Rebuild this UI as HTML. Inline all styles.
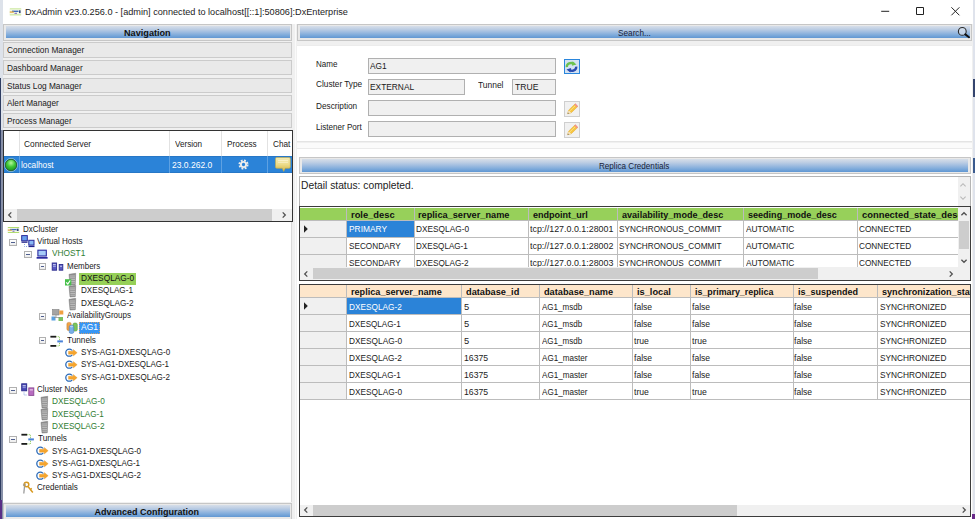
<!DOCTYPE html>
<html><head><meta charset="utf-8"><title>DxAdmin</title>
<style>
html,body{margin:0;padding:0}
body{width:975px;height:519px;overflow:hidden;background:#f0f0f0;font-family:"Liberation Sans",sans-serif;font-size:9px;color:#000;position:relative}
div,span,svg{position:absolute;box-sizing:border-box;white-space:nowrap}
.hdr{background:#e9e9e9;border:1px solid #c6c6c6}
.hdr i{position:absolute;left:1.5px;right:1.5px;top:1px;bottom:1.5px;background:linear-gradient(#d6dee9 0%,#bfcfe4 25%,#a0bde0 50%,#7fabdb 75%,#6197d2 100%)}
.nav{left:3px;width:289px;height:15.500px;background:#e9e9e9;border:1px solid #cbcbcb}
.exp{width:7.5px;height:7px;border:1px solid #b0b0b0;background:linear-gradient(#fff,#ececec)}
.exp:after{content:"";position:absolute;left:1px;right:1px;top:2px;height:1px;background:#4f5f8f}
.inp{background:#f0f0f0;border:1px solid #b0b0b0;height:16px}
.btn{width:16px;height:16px;background:#f1f1f1;border:1px solid #cfcfcf}
.vl{width:1px;background:#bcbcbc}
.hl{height:1px;background:#bcbcbc}
</style></head><body>
<div style="left:0;top:0;width:973px;height:24px;background:#fff"></div>
<div style="left:0;top:0;width:3px;height:519px;background:#dde2ea"></div>
<div style="left:0;top:78px;width:1px;height:441px;background:#2e3c60"></div><div style="left:1px;top:130px;width:1.500px;height:389px;background:#8790a8"></div>
<div style="left:972.700px;top:0;width:2.300px;height:519px;background:#dfe3ec"></div>
<svg style="left:9px;top:7.500px" width="13" height="8" viewBox="0 0 13 8"><path d="M0.800 1h11.400M0.800 6.800h11.400" stroke="#b2dc70" stroke-width="1"/><rect x="0.400" y="1.500" width="12" height="4.800" fill="#f3f9e8"/><rect x="3" y="2.600" width="6.500" height="1.400" fill="#3f6fc0"/><rect x="0.800" y="3.400" width="4" height="1.300" fill="#e2a23a"/><rect x="10" y="2.300" width="1.600" height="2.800" fill="#3a4a80"/><rect x="5.500" y="4.800" width="2.500" height="1" fill="#7a62b0"/></svg>
<div style="left:24.5px;top:5.2px;line-height:14px;height:14px;font-size:9.7px;color:#1c1c1c;transform:scaleX(0.9443);transform-origin:0 0;">DxAdmin v23.0.256.0 - [admin] connected to localhost[[::1]:50806]:DxEnterprise</div>
<svg style="left:878px;top:4px" width="90" height="16" viewBox="0 0 90 16"><path d="M3.200 7.300h8M38.500 3.500h7v7h-7zM73.400 3.300l8 8M81.400 3.300l-8 8" fill="none" stroke="#222" stroke-width="1"/></svg>
<div class="hdr" style="left:3px;top:24px;width:289px;height:16.500px"><i></i></div>
<div style="left:123.5px;top:26.8px;line-height:13px;height:13px;font-size:9.0px;color:#111;transform:scaleX(1.0151);transform-origin:0 0;font-weight:bold;">Navigation</div>
<div class="nav" style="top:42.2px"></div>
<div style="left:7.2px;top:44.3px;line-height:13px;height:13px;font-size:9.0px;color:#1a1a1a;transform:scaleX(0.9240);transform-origin:0 0;">Connection Manager</div>
<div class="nav" style="top:59.9px"></div>
<div style="left:7.2px;top:62.0px;line-height:13px;height:13px;font-size:9.0px;color:#1a1a1a;transform:scaleX(0.9226);transform-origin:0 0;">Dashboard Manager</div>
<div class="nav" style="top:77.5px"></div>
<div style="left:7.2px;top:79.6px;line-height:13px;height:13px;font-size:9.0px;color:#1a1a1a;transform:scaleX(0.9216);transform-origin:0 0;">Status Log Manager</div>
<div class="nav" style="top:95.2px"></div>
<div style="left:7.2px;top:97.3px;line-height:13px;height:13px;font-size:9.0px;color:#1a1a1a;transform:scaleX(0.9146);transform-origin:0 0;">Alert Manager</div>
<div class="nav" style="top:112.8px"></div>
<div style="left:7.2px;top:114.9px;line-height:13px;height:13px;font-size:9.0px;color:#1a1a1a;transform:scaleX(0.9173);transform-origin:0 0;">Process Manager</div>
<div style="left:2.500px;top:130px;width:290.500px;height:92px;background:#fff;border:1px solid #333"></div>
<div style="left:19px;top:131px;width:1px;height:25px;background:#e2e2e2"></div>
<div style="left:169px;top:131px;width:1px;height:25px;background:#e2e2e2"></div>
<div style="left:221px;top:131px;width:1px;height:25px;background:#e2e2e2"></div>
<div style="left:267px;top:131px;width:1px;height:25px;background:#e2e2e2"></div>
<div style="left:24.1px;top:138.4px;line-height:13px;height:13px;font-size:9.0px;color:#1a1a1a;transform:scaleX(0.9250);transform-origin:0 0;">Connected Server</div>
<div style="left:175.3px;top:138.4px;line-height:13px;height:13px;font-size:9.0px;color:#1a1a1a;transform:scaleX(0.9028);transform-origin:0 0;">Version</div>
<div style="left:226.5px;top:138.4px;line-height:13px;height:13px;font-size:9.0px;color:#1a1a1a;transform:scaleX(0.9135);transform-origin:0 0;">Process</div>
<div style="left:272.5px;top:138.4px;line-height:13px;height:13px;font-size:9.0px;color:#1a1a1a;transform:scaleX(0.9100);transform-origin:0 0;">Chat</div>
<div style="left:3.500px;top:156.300px;width:288.500px;height:16.700px;background:#2b83d8;border-top:1px solid #2777c6;border-bottom:1px solid #2777c6"></div>
<div style="left:19px;top:156.300px;width:1px;height:16.700px;background:#5ea1e2"></div>
<div style="left:169px;top:156.300px;width:1px;height:16.700px;background:#5ea1e2"></div>
<div style="left:221px;top:156.300px;width:1px;height:16.700px;background:#5ea1e2"></div>
<div style="left:267px;top:156.300px;width:1px;height:16.700px;background:#5ea1e2"></div>
<svg style="left:4px;top:157.500px" width="14" height="14" viewBox="0 0 14 14"><defs><radialGradient id="gb" cx="0.5" cy="0.32" r="0.65"><stop offset="0" stop-color="#b4f79c"/><stop offset="0.55" stop-color="#3cc632"/><stop offset="1" stop-color="#1f9a22"/></radialGradient></defs><circle cx="7" cy="7" r="6.500" fill="none" stroke="#d6ead6" stroke-width="0.7" opacity="0.8"/><circle cx="7" cy="7" r="5.700" fill="url(#gb)" stroke="#2c5a30" stroke-width="0.9"/></svg>
<div style="left:21.2px;top:159.2px;line-height:13px;height:13px;font-size:9.0px;color:#fff;transform:scaleX(0.9178);transform-origin:0 0;">localhost</div>
<div style="left:172.0px;top:159.2px;line-height:13px;height:13px;font-size:9.0px;color:#fff;transform:scaleX(0.9450);transform-origin:0 0;">23.0.262.0</div>
<svg style="left:237.300px;top:157.900px" width="13" height="13" viewBox="0 0 13 13"><circle cx="6.500" cy="6.500" r="4.100" fill="none" stroke="#ececec" stroke-width="1.900" stroke-dasharray="1.850 1.370"/><circle cx="6.500" cy="6.500" r="2.600" fill="none" stroke="#ececec" stroke-width="1.900"/></svg>
<svg style="left:275px;top:157px" width="16" height="15" viewBox="0 0 16 15"><defs><linearGradient id="cg" x1="0" y1="0" x2="0" y2="1"><stop offset="0" stop-color="#f3eab4"/><stop offset="0.5" stop-color="#ecdc8a"/><stop offset="1" stop-color="#d2b444"/></linearGradient></defs><path d="M1.800 0.500h12.200a1.300 1.300 0 0 1 1.300 1.300v8.200a1.300 1.300 0 0 1-1.300 1.300H10.200l-1.500 3.100-1.500-3.100H1.800a1.300 1.300 0 0 1-1.300-1.300v-8.200a1.300 1.300 0 0 1 1.300-1.300z" fill="url(#cg)" stroke="#c9ad42" stroke-width="0.6"/><path d="M3 3.500h10M3 5.300h10" stroke="#f9f2cc" stroke-width="0.9"/></svg>
<div style="left:3.500px;top:208.500px;width:288.500px;height:12.500px;background:#f0f0f0"></div>
<div style="left:16.500px;top:208.500px;width:255px;height:12.500px;background:#cdcdcd"></div>
<svg style="left:5.0px;top:209.7px" width="10" height="10" viewBox="-5 -5 10 10"><path transform="translate(-1.3 0)" d="M2.6 -2.6L0 0L2.6 2.6" fill="none" stroke="#505050" stroke-width="1.3"/></svg>
<svg style="left:279.0px;top:209.7px" width="10" height="10" viewBox="-5 -5 10 10"><path transform="translate(1.3 0)" d="M-2.6 -2.6L0 0L-2.6 2.6" fill="none" stroke="#505050" stroke-width="1.3"/></svg>
<div style="left:2.500px;top:222px;width:289.500px;height:279.500px;background:#fff;border-right:1px solid #d9d9d9"></div>
<svg style="left:6.5px;top:222.7px" width="14" height="14" viewBox="0 0 14 14" overflow="visible"><path d="M0.800 4.500h11.400M0.800 9.500h11.400" stroke="#b2dc70" stroke-width="1"/><rect x="0.500" y="5" width="12" height="4" fill="#f4f9ea"/><rect x="3" y="5.900" width="6.500" height="1.300" fill="#3f6fc0"/><rect x="0.800" y="6.500" width="4" height="1.200" fill="#e2a23a"/><rect x="9.800" y="5.700" width="1.800" height="2.300" fill="#3a4a80"/><rect x="5.500" y="7.800" width="2" height="0.900" fill="#7a62b0"/></svg>
<div style="left:22.5px;top:222.8px;line-height:13px;height:13px;font-size:9.0px;color:#1a1a1a;transform:scaleX(0.8859);transform-origin:0 0;">DxCluster</div>
<div class="exp" style="left:9px;top:238.7px"></div>
<svg style="left:21px;top:235.0px" width="14" height="14" viewBox="0 0 14 14" overflow="visible"><rect x="0.700" y="0.600" width="5.600" height="5.200" fill="#6aa0ee" stroke="#2a2a9a" stroke-width="1"/><rect x="0.500" y="6.500" width="6" height="1.300" fill="#23238a"/><rect x="7.800" y="5.300" width="5.200" height="4.800" fill="#8ab8f4" stroke="#2a2a9a" stroke-width="1"/><rect x="7.500" y="10.800" width="6" height="1.300" fill="#23238a"/><path d="M3.500 9v2.500h3.500" fill="none" stroke="#7a9ae0" stroke-width="0.9" stroke-dasharray="1 1"/></svg>
<div style="left:36.9px;top:235.1px;line-height:13px;height:13px;font-size:9.0px;color:#1a1a1a;transform:scaleX(0.8967);transform-origin:0 0;">Virtual Hosts</div>
<div class="exp" style="left:24px;top:251.0px"></div>
<svg style="left:36px;top:247.3px" width="14" height="14" viewBox="0 0 14 14" overflow="visible"><rect x="1.900" y="3.200" width="8.400" height="5.800" fill="#a6ccf8" stroke="#2a2aa0" stroke-width="1.100"/><rect x="0.600" y="10" width="11" height="1.700" fill="#2a2aa0"/></svg>
<div style="left:51.7px;top:247.4px;line-height:13px;height:13px;font-size:9.0px;color:#2f7d32;transform:scaleX(0.9248);transform-origin:0 0;">VHOST1</div>
<div class="exp" style="left:38.5px;top:263.3px"></div>
<svg style="left:50.5px;top:259.6px" width="14" height="14" viewBox="0 0 14 14" overflow="visible"><rect x="1.200" y="3" width="4.400" height="7.200" fill="#5a5ac4" stroke="#2e2e8e" stroke-width="0.9"/><rect x="2" y="4.300" width="2.800" height="0.900" fill="#e8eefc"/><rect x="2" y="6.200" width="2.800" height="0.700" fill="#b8c0ee"/><rect x="8.200" y="4.500" width="3.600" height="5.700" fill="#5a5ac4" stroke="#2e2e8e" stroke-width="0.9"/><rect x="9" y="5.800" width="2" height="0.800" fill="#e8eefc"/></svg>
<div style="left:66.5px;top:259.8px;line-height:13px;height:13px;font-size:9.0px;color:#1a1a1a;transform:scaleX(0.8852);transform-origin:0 0;">Members</div>
<svg style="left:65px;top:272.0px" width="14" height="14" viewBox="0 0 14 14" overflow="visible"><path d="M4 2.300L10.700 1.300L10.300 12.700L5 13z" fill="#8f8f8f" stroke="#7a7a7a" stroke-width="0.5"/><path d="M5 4h5M5.100 5.800h4.900M5.200 7.600h4.800M5.300 9.400h4.700M5.400 11.200h4.600" stroke="#c9c9c9" stroke-width="0.8"/><rect x="0" y="7.200" width="6.300" height="6.300" fill="#47c04a"/><path d="M1.200 10.300l1.600 1.700L5.200 8.500" stroke="#fff" fill="none" stroke-width="1.200"/></svg>
<div style="left:79px;top:273.3px;width:57px;height:11.600px;background:#96d058"></div>
<div style="left:81.0px;top:272.1px;line-height:13px;height:13px;font-size:9.0px;color:#111;transform:scaleX(0.9249);transform-origin:0 0;">DXESQLAG-0</div>
<svg style="left:65px;top:284.3px" width="14" height="14" viewBox="0 0 14 14" overflow="visible"><path d="M4 2.300L10.700 1.300L10.300 12.700L5 13z" fill="#8f8f8f" stroke="#7a7a7a" stroke-width="0.5"/><path d="M5 4h5M5.100 5.800h4.900M5.200 7.600h4.800M5.300 9.400h4.700M5.400 11.200h4.600" stroke="#c9c9c9" stroke-width="0.8"/></svg>
<div style="left:81.0px;top:284.4px;line-height:13px;height:13px;font-size:9.0px;color:#1a1a1a;transform:scaleX(0.9023);transform-origin:0 0;">DXESQLAG-1</div>
<svg style="left:65px;top:296.6px" width="14" height="14" viewBox="0 0 14 14" overflow="visible"><path d="M4 2.300L10.700 1.300L10.300 12.700L5 13z" fill="#8f8f8f" stroke="#7a7a7a" stroke-width="0.5"/><path d="M5 4h5M5.100 5.800h4.900M5.200 7.600h4.800M5.300 9.400h4.700M5.400 11.200h4.600" stroke="#c9c9c9" stroke-width="0.8"/></svg>
<div style="left:81.0px;top:296.7px;line-height:13px;height:13px;font-size:9.0px;color:#1a1a1a;transform:scaleX(0.9162);transform-origin:0 0;">DXESQLAG-2</div>
<div class="exp" style="left:38.5px;top:312.6px"></div>
<svg style="left:50.5px;top:308.9px" width="14" height="14" viewBox="0 0 14 14" overflow="visible"><rect x="1.500" y="0.500" width="6.500" height="5.500" fill="#a4a4a4" stroke="#808080" stroke-width="0.6"/><rect x="8.300" y="1.500" width="4" height="4" fill="#f0a040"/><rect x="0.500" y="7.500" width="4" height="4" fill="#5aa0e0"/><rect x="7.500" y="8" width="4.500" height="4" fill="#7cc060"/><path d="M5 6v2.500M3 8.500h6" stroke="#8a8a8a" stroke-width="0.7" fill="none"/></svg>
<div style="left:66.5px;top:309.0px;line-height:13px;height:13px;font-size:9.0px;color:#1a1a1a;transform:scaleX(0.8891);transform-origin:0 0;">AvailabilityGroups</div>
<svg style="left:65.5px;top:321.2px" width="14" height="14" viewBox="0 0 14 14" overflow="visible"><rect x="0.900" y="1.400" width="4.300" height="8.100" rx="1.600" fill="#f0a246" stroke="#c07c28" stroke-width="0.5"/><rect x="6.900" y="2" width="4.400" height="8.100" rx="1.600" fill="#7cc45a" stroke="#4f9438" stroke-width="0.5"/><rect x="3.200" y="4.300" width="4.600" height="8.100" rx="1.600" fill="#78aee8" stroke="#3f78bc" stroke-width="0.5"/><ellipse cx="5.500" cy="5.600" rx="1.700" ry="0.800" fill="#b4d2f4"/></svg>
<div style="left:79px;top:322.2px;width:21.300px;height:12px;background:#3796f4;outline:1px dotted #c9a27a;outline-offset:-1px"></div>
<div style="left:81.0px;top:321.3px;line-height:13px;height:13px;font-size:9.0px;color:#fff;transform:scaleX(0.9384);transform-origin:0 0;">AG1</div>
<div class="exp" style="left:38.5px;top:337.2px"></div>
<svg style="left:50px;top:333.5px" width="14" height="14" viewBox="0 0 14 14" overflow="visible"><rect x="0.400" y="1.800" width="5.800" height="1.800" fill="#1c1c1c"/><rect x="0.400" y="11" width="5.800" height="1.800" fill="#1c1c1c"/><path d="M6.200 2.700h3.300v9.200h-3.300" stroke="#8cc858" fill="none" stroke-width="0.9" stroke-dasharray="1.100 0.800"/><rect x="7.300" y="6.400" width="5.600" height="2" fill="#4a82d8"/></svg>
<div style="left:66.5px;top:333.7px;line-height:13px;height:13px;font-size:9.0px;color:#1a1a1a;transform:scaleX(0.9121);transform-origin:0 0;">Tunnels</div>
<svg style="left:65px;top:345.8px" width="14" height="14" viewBox="0 0 14 14" overflow="visible"><circle cx="4.300" cy="6.700" r="3.500" fill="#fff" stroke="#2a6ab8" stroke-width="1.300"/><rect x="6.500" y="4.500" width="3" height="4.400" fill="#fff"/><path d="M3.500 5.200H8.300V3.500L12.200 6.700L8.300 9.900V8.200H3.500z" fill="#f5a52e" stroke="#e08a14" stroke-width="0.3"/></svg>
<div style="left:81.0px;top:346.0px;line-height:13px;height:13px;font-size:9.0px;color:#1a1a1a;transform:scaleX(0.8962);transform-origin:0 0;">SYS-AG1-DXESQLAG-0</div>
<svg style="left:65px;top:358.2px" width="14" height="14" viewBox="0 0 14 14" overflow="visible"><circle cx="4.300" cy="6.700" r="3.500" fill="#fff" stroke="#2a6ab8" stroke-width="1.300"/><rect x="6.500" y="4.500" width="3" height="4.400" fill="#fff"/><path d="M3.500 5.200H8.300V3.500L12.200 6.700L8.300 9.900V8.200H3.500z" fill="#f5a52e" stroke="#e08a14" stroke-width="0.3"/></svg>
<div style="left:81.0px;top:358.3px;line-height:13px;height:13px;font-size:9.0px;color:#1a1a1a;transform:scaleX(0.8841);transform-origin:0 0;">SYS-AG1-DXESQLAG-1</div>
<svg style="left:65px;top:370.5px" width="14" height="14" viewBox="0 0 14 14" overflow="visible"><circle cx="4.300" cy="6.700" r="3.500" fill="#fff" stroke="#2a6ab8" stroke-width="1.300"/><rect x="6.500" y="4.500" width="3" height="4.400" fill="#fff"/><path d="M3.500 5.200H8.300V3.500L12.200 6.700L8.300 9.900V8.200H3.500z" fill="#f5a52e" stroke="#e08a14" stroke-width="0.3"/></svg>
<div style="left:81.0px;top:370.6px;line-height:13px;height:13px;font-size:9.0px;color:#1a1a1a;transform:scaleX(0.8932);transform-origin:0 0;">SYS-AG1-DXESQLAG-2</div>
<div class="exp" style="left:9px;top:386.5px"></div>
<svg style="left:21px;top:382.8px" width="14" height="14" viewBox="0 0 14 14" overflow="visible"><rect x="0.700" y="0.800" width="5" height="7" fill="#4848b4" stroke="#28288a" stroke-width="0.9"/><rect x="1.600" y="2.300" width="3.200" height="1" fill="#e8eefc"/><rect x="1.600" y="4.300" width="3.200" height="0.800" fill="#a8b0e8"/><rect x="7.800" y="4.900" width="5" height="7.500" fill="#b86cc0" stroke="#8a4a94" stroke-width="0.9"/><rect x="8.700" y="6.400" width="3.200" height="1" fill="#f0dff2"/><path d="M3 9.500v2.500h3.500" fill="none" stroke="#7a9ae0" stroke-width="0.9" stroke-dasharray="1 1"/></svg>
<div style="left:36.9px;top:382.9px;line-height:13px;height:13px;font-size:9.0px;color:#1a1a1a;transform:scaleX(0.8856);transform-origin:0 0;">Cluster Nodes</div>
<svg style="left:37px;top:395.1px" width="14" height="14" viewBox="0 0 14 14" overflow="visible"><path d="M4 2.300L10.700 1.300L10.300 12.700L5 13z" fill="#8f8f8f" stroke="#7a7a7a" stroke-width="0.5"/><path d="M5 4h5M5.100 5.800h4.900M5.200 7.600h4.800M5.300 9.400h4.700M5.400 11.200h4.600" stroke="#c9c9c9" stroke-width="0.8"/></svg>
<div style="left:51.7px;top:395.2px;line-height:13px;height:13px;font-size:9.0px;color:#2f7d32;transform:scaleX(0.9197);transform-origin:0 0;">DXESQLAG-0</div>
<svg style="left:37px;top:407.4px" width="14" height="14" viewBox="0 0 14 14" overflow="visible"><path d="M4 2.300L10.700 1.300L10.300 12.700L5 13z" fill="#8f8f8f" stroke="#7a7a7a" stroke-width="0.5"/><path d="M5 4h5M5.100 5.800h4.900M5.200 7.600h4.800M5.300 9.400h4.700M5.400 11.200h4.600" stroke="#c9c9c9" stroke-width="0.8"/></svg>
<div style="left:51.7px;top:407.5px;line-height:13px;height:13px;font-size:9.0px;color:#2f7d32;transform:scaleX(0.8988);transform-origin:0 0;">DXESQLAG-1</div>
<svg style="left:37px;top:419.7px" width="14" height="14" viewBox="0 0 14 14" overflow="visible"><path d="M4 2.300L10.700 1.300L10.300 12.700L5 13z" fill="#8f8f8f" stroke="#7a7a7a" stroke-width="0.5"/><path d="M5 4h5M5.100 5.800h4.900M5.200 7.600h4.800M5.300 9.400h4.700M5.400 11.200h4.600" stroke="#c9c9c9" stroke-width="0.8"/></svg>
<div style="left:51.7px;top:419.9px;line-height:13px;height:13px;font-size:9.0px;color:#2f7d32;transform:scaleX(0.9127);transform-origin:0 0;">DXESQLAG-2</div>
<div class="exp" style="left:9px;top:435.8px"></div>
<svg style="left:21px;top:432.1px" width="14" height="14" viewBox="0 0 14 14" overflow="visible"><rect x="0.400" y="1.800" width="5.800" height="1.800" fill="#1c1c1c"/><rect x="0.400" y="11" width="5.800" height="1.800" fill="#1c1c1c"/><path d="M6.200 2.700h3.300v9.200h-3.300" stroke="#8cc858" fill="none" stroke-width="0.9" stroke-dasharray="1.100 0.800"/><rect x="7.300" y="6.400" width="5.600" height="2" fill="#4a82d8"/></svg>
<div style="left:37.5px;top:432.2px;line-height:13px;height:13px;font-size:9.0px;color:#1a1a1a;transform:scaleX(0.9121);transform-origin:0 0;">Tunnels</div>
<svg style="left:35.5px;top:444.4px" width="14" height="14" viewBox="0 0 14 14" overflow="visible"><circle cx="4.300" cy="6.700" r="3.500" fill="#fff" stroke="#2a6ab8" stroke-width="1.300"/><rect x="6.500" y="4.500" width="3" height="4.400" fill="#fff"/><path d="M3.500 5.200H8.300V3.500L12.200 6.700L8.300 9.900V8.200H3.500z" fill="#f5a52e" stroke="#e08a14" stroke-width="0.3"/></svg>
<div style="left:51.7px;top:444.5px;line-height:13px;height:13px;font-size:9.0px;color:#1a1a1a;transform:scaleX(0.8952);transform-origin:0 0;">SYS-AG1-DXESQLAG-0</div>
<svg style="left:35.5px;top:456.7px" width="14" height="14" viewBox="0 0 14 14" overflow="visible"><circle cx="4.300" cy="6.700" r="3.500" fill="#fff" stroke="#2a6ab8" stroke-width="1.300"/><rect x="6.500" y="4.500" width="3" height="4.400" fill="#fff"/><path d="M3.500 5.200H8.300V3.500L12.200 6.700L8.300 9.900V8.200H3.500z" fill="#f5a52e" stroke="#e08a14" stroke-width="0.3"/></svg>
<div style="left:51.7px;top:456.8px;line-height:13px;height:13px;font-size:9.0px;color:#1a1a1a;transform:scaleX(0.8841);transform-origin:0 0;">SYS-AG1-DXESQLAG-1</div>
<svg style="left:35.5px;top:469.0px" width="14" height="14" viewBox="0 0 14 14" overflow="visible"><circle cx="4.300" cy="6.700" r="3.500" fill="#fff" stroke="#2a6ab8" stroke-width="1.300"/><rect x="6.500" y="4.500" width="3" height="4.400" fill="#fff"/><path d="M3.500 5.200H8.300V3.500L12.200 6.700L8.300 9.900V8.200H3.500z" fill="#f5a52e" stroke="#e08a14" stroke-width="0.3"/></svg>
<div style="left:51.7px;top:469.1px;line-height:13px;height:13px;font-size:9.0px;color:#1a1a1a;transform:scaleX(0.8932);transform-origin:0 0;">SYS-AG1-DXESQLAG-2</div>
<svg style="left:21.5px;top:481.3px" width="14" height="14" viewBox="0 0 14 14" overflow="visible"><circle cx="4.500" cy="3.500" r="2.300" fill="none" stroke="#d89a20" stroke-width="1.500"/><path d="M6 5.500L10.800 11.500M8.300 8.500l1.500-1.200" stroke="#d89a20" stroke-width="1.500" fill="none"/><path d="M2.500 5.500L1.800 12.500" stroke="#9a9a9a" stroke-width="1.300"/><circle cx="2.500" cy="4" r="1.200" fill="none" stroke="#9a9a9a" stroke-width="0.8"/></svg>
<div style="left:36.5px;top:481.4px;line-height:13px;height:13px;font-size:9.0px;color:#1a1a1a;transform:scaleX(0.8941);transform-origin:0 0;">Credentials</div>
<div class="hdr" style="left:3px;top:502.600px;width:289px;height:17px"><i style="top:1.900px;bottom:2px"></i></div>
<div style="left:94.4px;top:505.9px;line-height:13px;height:13px;font-size:9.0px;color:#111;transform:scaleX(1.0000);transform-origin:0 0;font-weight:bold;">Advanced Configuration</div>
<div style="left:294.500px;top:24px;width:1.500px;height:495px;background:#fafafa"></div>
<div class="hdr" style="left:297px;top:24px;width:675px;height:16.500px"><i></i></div>
<div style="left:617.9px;top:26.9px;line-height:13px;height:13px;font-size:9.0px;color:#1a2238;transform:scaleX(0.9134);transform-origin:0 0;">Search...</div>
<svg style="left:956px;top:25px" width="15" height="15" viewBox="0 0 15 15"><circle cx="6.300" cy="6.400" r="3.900" fill="#d4e0ee" fill-opacity="0.7" stroke="#2a2a2a" stroke-width="1.100"/><path d="M9.300 9.400l3.700 2.800" stroke="#111" stroke-width="2" stroke-linecap="round"/></svg>
<div style="left:296.500px;top:45.200px;width:675.500px;height:97.300px;background:#fff;border-top:1px solid #ececec;border-bottom:1px solid #e4e4e4"></div>
<div style="left:316.0px;top:57.9px;line-height:13px;height:13px;font-size:9.0px;color:#1a1a1a;transform:scaleX(0.8914);transform-origin:0 0;">Name</div>
<div style="left:315.5px;top:78.2px;line-height:13px;height:13px;font-size:9.0px;color:#1a1a1a;transform:scaleX(0.9165);transform-origin:0 0;">Cluster Type</div>
<div style="left:478.1px;top:78.6px;line-height:13px;height:13px;font-size:9.0px;color:#1a1a1a;transform:scaleX(0.9380);transform-origin:0 0;">Tunnel</div>
<div style="left:316.0px;top:99.9px;line-height:13px;height:13px;font-size:9.0px;color:#1a1a1a;transform:scaleX(0.9152);transform-origin:0 0;">Description</div>
<div style="left:316.0px;top:120.9px;line-height:13px;height:13px;font-size:9.0px;color:#1a1a1a;transform:scaleX(0.8976);transform-origin:0 0;">Listener Port</div>
<div class="inp" style="left:368px;top:57.700px;width:187.800px"></div>
<div class="inp" style="left:368px;top:78.600px;width:97px"></div>
<div class="inp" style="left:512px;top:78.600px;width:43.800px"></div>
<div class="inp" style="left:368px;top:99.800px;width:187.800px"></div>
<div class="inp" style="left:368px;top:120.800px;width:187.800px"></div>
<div style="left:369.7px;top:60.4px;line-height:13px;height:13px;font-size:9.0px;color:#1a1a1a;transform:scaleX(0.9273);transform-origin:0 0;">AG1</div>
<div style="left:370.2px;top:81.2px;line-height:13px;height:13px;font-size:9.0px;color:#1a1a1a;transform:scaleX(0.9282);transform-origin:0 0;">EXTERNAL</div>
<div style="left:514.7px;top:81.2px;line-height:13px;height:13px;font-size:9.0px;color:#1a1a1a;transform:scaleX(0.9551);transform-origin:0 0;">TRUE</div>
<div style="left:563.500px;top:58.800px;width:16.700px;height:15.300px;border:1.600px solid #2a86dc;background:#d4e2f2"></div>
<svg style="left:565.300px;top:60.500px" width="13" height="12" viewBox="0 0 13 12"><path d="M1.800 6.200C1.500 2.500 6 0.800 9 3" stroke="#6cc24e" stroke-width="2.300" fill="none"/><path d="M7.600 0.300l3.900 3.200-4.600 1.300z" fill="#6cc24e"/><path d="M11.200 5.600C11.600 9.300 7 11 4 8.800" stroke="#2a4cb0" stroke-width="2.300" fill="none"/><path d="M5.400 11.600l-3.900-3.200 4.600-1.300z" fill="#2a4cb0"/></svg>
<div class="btn" style="left:564px;top:100.7px"></div>
<svg style="left:566px;top:102.2px" width="13" height="13" viewBox="0 0 13 13"><path d="M1.600 11.800l1-3.600 6.600-6.400 2.600 2.600-6.600 6.400z" fill="#f7c640" stroke="#e2a52a" stroke-width="0.5"/><path d="M3.600 9.200l6-5.800" stroke="#fbe08a" stroke-width="0.9"/><path d="M1.600 11.800l1-3.600 2.600 2.600z" fill="#f4e4c4"/><path d="M1.600 11.800l0.400-1.400 1 1z" fill="#555"/><path d="M8.400 2.600l1-1 2.600 2.600-1 1z" fill="#f08a96"/></svg>
<div class="btn" style="left:564px;top:121.8px"></div>
<svg style="left:566px;top:123.3px" width="13" height="13" viewBox="0 0 13 13"><path d="M1.600 11.800l1-3.600 6.600-6.400 2.600 2.600-6.600 6.400z" fill="#f7c640" stroke="#e2a52a" stroke-width="0.5"/><path d="M3.600 9.200l6-5.800" stroke="#fbe08a" stroke-width="0.9"/><path d="M1.600 11.800l1-3.600 2.600 2.600z" fill="#f4e4c4"/><path d="M1.600 11.800l0.400-1.400 1 1z" fill="#555"/><path d="M8.400 2.600l1-1 2.600 2.600-1 1z" fill="#f08a96"/></svg>
<div style="left:296.500px;top:142.500px;width:675.500px;height:6.500px;background:#fbfbfb;border-bottom:1px solid #ebebeb"></div>
<div style="left:297px;top:149px;width:675px;height:370px;background:#fff"></div>
<div style="left:972.500px;top:158px;width:2.500px;height:15px;background:#3a5a8e"></div>
<div style="left:973px;top:79px;width:2px;height:18px;background:#34446e"></div>
<div class="hdr" style="left:299px;top:157px;width:671.500px;height:17px"><i></i></div>
<div style="left:599.1px;top:159.9px;line-height:13px;height:13px;font-size:9.0px;color:#1a2238;transform:scaleX(0.9008);transform-origin:0 0;">Replica Credentials</div>
<div style="left:298.500px;top:175.500px;width:672px;height:31px;background:#fff;border:1px solid #b4b4b4"></div>
<div style="left:301.0px;top:177.5px;line-height:15px;height:15px;font-size:10.4px;color:#222;transform:scaleX(0.9897);transform-origin:0 0;">Detail status: completed.</div>
<div style="left:957.500px;top:176.500px;width:12px;height:29px;background:#f0f0f0"></div>
<svg style="left:958.0px;top:179.5px" width="10" height="10" viewBox="-5 -5 10 10"><path transform="translate(0 -1.3)" d="M-2.6 2.6L0 0L2.6 2.6" fill="none" stroke="#b8b8b8" stroke-width="1.1"/></svg>
<svg style="left:958.0px;top:193.0px" width="10" height="10" viewBox="-5 -5 10 10"><path transform="translate(0 1.3)" d="M-2.6 -2.6L0 0L2.6 -2.6" fill="none" stroke="#b8b8b8" stroke-width="1.1"/></svg>
<div style="left:298.500px;top:205.700px;width:672px;height:75.300px;border:1px solid #3c3c3c;background:#fff"></div>
<div style="left:299.5px;top:207.5px;width:658.0px;height:59.0px;overflow:hidden">
<div style="left:0;top:0;width:658.0px;height:12.7px;background:#97d05a"></div>
<div style="left:0;top:12.7px;width:46.80000000000001px;height:50.7px;background:#f0f0f0"></div>
<div class="hl" style="left:0;top:12.2px;width:658.0px"></div>
<div class="hl" style="left:0;top:29.1px;width:658.0px"></div>
<div class="hl" style="left:0;top:46.0px;width:658.0px"></div>
<div class="hl" style="left:0;top:62.9px;width:658.0px"></div>
<div style="left:47.3px;top:13.2px;width:67.0px;height:15.9px;background:#2b83d8"></div>
<svg style="left:4.8px;top:17.1px" width="5" height="8" viewBox="0 0 5 8"><path d="M0 0.300L3.800 4L0 7.700z" fill="#222"/></svg>
<div class="vl" style="left:46.3px;top:0;height:63.4px"></div>
<div class="vl" style="left:114.2px;top:0;height:63.4px"></div>
<div class="vl" style="left:228.7px;top:0;height:63.4px"></div>
<div class="vl" style="left:317.0px;top:0;height:63.4px"></div>
<div class="vl" style="left:443.7px;top:0;height:63.4px"></div>
<div class="vl" style="left:557.4px;top:0;height:63.4px"></div>
<div style="left:51.4px;top:0.7px;line-height:13px;height:13px;font-size:9.4px;color:#111;transform:scaleX(0.9960);transform-origin:0 0;font-weight:bold;">role_desc</div>
<div style="left:118.5px;top:0.7px;line-height:13px;height:13px;font-size:9.4px;color:#111;transform:scaleX(0.9797);transform-origin:0 0;font-weight:bold;">replica_server_name</div>
<div style="left:233.4px;top:0.7px;line-height:13px;height:13px;font-size:9.4px;color:#111;transform:scaleX(0.9636);transform-origin:0 0;font-weight:bold;">endpoint_url</div>
<div style="left:322.0px;top:0.7px;line-height:13px;height:13px;font-size:9.4px;color:#111;transform:scaleX(0.9662);transform-origin:0 0;font-weight:bold;">availability_mode_desc</div>
<div style="left:448.8px;top:0.7px;line-height:13px;height:13px;font-size:9.4px;color:#111;transform:scaleX(0.9639);transform-origin:0 0;font-weight:bold;">seeding_mode_desc</div>
<div style="left:562.3px;top:0.7px;line-height:13px;height:13px;font-size:9.4px;color:#111;transform:scaleX(1.0003);transform-origin:0 0;font-weight:bold;">connected_state_desc</div>
<div style="left:49.8px;top:15.6px;line-height:13px;height:13px;font-size:9.0px;color:#fff;transform:scaleX(0.9304);transform-origin:0 0;">PRIMARY</div>
<div style="left:116.3px;top:15.6px;line-height:13px;height:13px;font-size:9.0px;color:#222;transform:scaleX(0.9214);transform-origin:0 0;">DXESQLAG-0</div>
<div style="left:230.5px;top:15.6px;line-height:13px;height:13px;font-size:9.0px;color:#222;transform:scaleX(0.9862);transform-origin:0 0;">tcp://127.0.0.1:28001</div>
<div style="left:319.5px;top:15.6px;line-height:13px;height:13px;font-size:9.0px;color:#222;transform:scaleX(0.9120);transform-origin:0 0;">SYNCHRONOUS_COMMIT</div>
<div style="left:446.3px;top:15.6px;line-height:13px;height:13px;font-size:9.0px;color:#222;transform:scaleX(0.9259);transform-origin:0 0;">AUTOMATIC</div>
<div style="left:559.7px;top:15.6px;line-height:13px;height:13px;font-size:9.0px;color:#222;transform:scaleX(0.9158);transform-origin:0 0;">CONNECTED</div>
<div style="left:49.8px;top:32.5px;line-height:13px;height:13px;font-size:9.0px;color:#222;transform:scaleX(0.9112);transform-origin:0 0;">SECONDARY</div>
<div style="left:116.3px;top:32.5px;line-height:13px;height:13px;font-size:9.0px;color:#222;transform:scaleX(0.9006);transform-origin:0 0;">DXESQLAG-1</div>
<div style="left:230.5px;top:32.5px;line-height:13px;height:13px;font-size:9.0px;color:#222;transform:scaleX(0.9862);transform-origin:0 0;">tcp://127.0.0.1:28002</div>
<div style="left:319.5px;top:32.5px;line-height:13px;height:13px;font-size:9.0px;color:#222;transform:scaleX(0.9120);transform-origin:0 0;">SYNCHRONOUS_COMMIT</div>
<div style="left:446.3px;top:32.5px;line-height:13px;height:13px;font-size:9.0px;color:#222;transform:scaleX(0.9259);transform-origin:0 0;">AUTOMATIC</div>
<div style="left:559.7px;top:32.5px;line-height:13px;height:13px;font-size:9.0px;color:#222;transform:scaleX(0.9158);transform-origin:0 0;">CONNECTED</div>
<div style="left:49.8px;top:49.4px;line-height:13px;height:13px;font-size:9.0px;color:#222;transform:scaleX(0.9112);transform-origin:0 0;">SECONDARY</div>
<div style="left:116.3px;top:49.4px;line-height:13px;height:13px;font-size:9.0px;color:#222;transform:scaleX(0.9145);transform-origin:0 0;">DXESQLAG-2</div>
<div style="left:230.5px;top:49.4px;line-height:13px;height:13px;font-size:9.0px;color:#222;transform:scaleX(0.9862);transform-origin:0 0;">tcp://127.0.0.1:28003</div>
<div style="left:319.5px;top:49.4px;line-height:13px;height:13px;font-size:9.0px;color:#222;transform:scaleX(0.9120);transform-origin:0 0;">SYNCHRONOUS_COMMIT</div>
<div style="left:446.3px;top:49.4px;line-height:13px;height:13px;font-size:9.0px;color:#222;transform:scaleX(0.9259);transform-origin:0 0;">AUTOMATIC</div>
<div style="left:559.7px;top:49.4px;line-height:13px;height:13px;font-size:9.0px;color:#222;transform:scaleX(0.9158);transform-origin:0 0;">CONNECTED</div>
</div>
<div style="left:957.500px;top:206.700px;width:12px;height:60px;background:#f0f0f0"></div>
<div style="left:958.500px;top:220.600px;width:10.500px;height:28.800px;background:#cdcdcd"></div>
<svg style="left:958.6px;top:208.7px" width="10" height="10" viewBox="-5 -5 10 10"><path transform="translate(0 -1.3)" d="M-2.6 2.6L0 0L2.6 2.6" fill="none" stroke="#505050" stroke-width="1.3"/></svg>
<svg style="left:958.6px;top:255.5px" width="10" height="10" viewBox="-5 -5 10 10"><path transform="translate(0 1.3)" d="M-2.6 -2.6L0 0L2.6 -2.6" fill="none" stroke="#505050" stroke-width="1.3"/></svg>
<div style="left:299.500px;top:266.500px;width:670px;height:13px;background:#f0f0f0"></div>
<div style="left:312.500px;top:267.500px;width:505px;height:11.500px;background:#cdcdcd"></div>
<svg style="left:300.5px;top:268.5px" width="10" height="10" viewBox="-5 -5 10 10"><path transform="translate(-1.3 0)" d="M2.6 -2.6L0 0L2.6 2.6" fill="none" stroke="#505050" stroke-width="1.3"/></svg>
<svg style="left:945.5px;top:268.5px" width="10" height="10" viewBox="-5 -5 10 10"><path transform="translate(1.3 0)" d="M-2.6 -2.6L0 0L-2.6 2.6" fill="none" stroke="#505050" stroke-width="1.3"/></svg>
<div style="left:298.500px;top:283.600px;width:672.500px;height:233.500px;border:1px solid #3c3c3c;background:#fff"></div>
<div style="left:299.5px;top:284.5px;width:670.3px;height:220.5px;overflow:hidden">
<div style="left:0;top:0;width:670.3px;height:13.3px;background:#fde6cb"></div>
<div style="left:0;top:13.3px;width:46.80000000000001px;height:101.6px;background:#f0f0f0"></div>
<div class="hl" style="left:0;top:12.8px;width:670.3px"></div>
<div class="hl" style="left:0;top:29.7px;width:670.3px"></div>
<div class="hl" style="left:0;top:46.7px;width:670.3px"></div>
<div class="hl" style="left:0;top:63.6px;width:670.3px"></div>
<div class="hl" style="left:0;top:80.5px;width:670.3px"></div>
<div class="hl" style="left:0;top:97.5px;width:670.3px"></div>
<div class="hl" style="left:0;top:114.4px;width:670.3px"></div>
<div style="left:47.3px;top:13.8px;width:114.8px;height:15.9px;background:#2b83d8"></div>
<svg style="left:4.8px;top:17.8px" width="5" height="8" viewBox="0 0 5 8"><path d="M0 0.300L3.800 4L0 7.700z" fill="#222"/></svg>
<div class="vl" style="left:46.3px;top:0;height:114.9px"></div>
<div class="vl" style="left:161.6px;top:0;height:114.9px"></div>
<div class="vl" style="left:239.5px;top:0;height:114.9px"></div>
<div class="vl" style="left:332.8px;top:0;height:114.9px"></div>
<div class="vl" style="left:390.3px;top:0;height:114.9px"></div>
<div class="vl" style="left:493.0px;top:0;height:114.9px"></div>
<div class="vl" style="left:577.3px;top:0;height:114.9px"></div>
<div style="left:51.7px;top:0.7px;line-height:13px;height:13px;font-size:9.4px;color:#111;transform:scaleX(0.9722);transform-origin:0 0;font-weight:bold;">replica_server_name</div>
<div style="left:166.6px;top:0.7px;line-height:13px;height:13px;font-size:9.4px;color:#111;transform:scaleX(0.9836);transform-origin:0 0;font-weight:bold;">database_id</div>
<div style="left:244.1px;top:0.7px;line-height:13px;height:13px;font-size:9.4px;color:#111;transform:scaleX(0.9822);transform-origin:0 0;font-weight:bold;">database_name</div>
<div style="left:337.6px;top:0.7px;line-height:13px;height:13px;font-size:9.4px;color:#111;transform:scaleX(0.9856);transform-origin:0 0;font-weight:bold;">is_local</div>
<div style="left:395.7px;top:0.7px;line-height:13px;height:13px;font-size:9.4px;color:#111;transform:scaleX(0.9461);transform-origin:0 0;font-weight:bold;">is_primary_replica</div>
<div style="left:498.0px;top:0.7px;line-height:13px;height:13px;font-size:9.4px;color:#111;transform:scaleX(0.9613);transform-origin:0 0;font-weight:bold;">is_suspended</div>
<div style="left:582.3px;top:0.7px;line-height:13px;height:13px;font-size:9.4px;color:#111;transform:scaleX(0.9684);transform-origin:0 0;font-weight:bold;">synchronization_state_desc</div>
<div style="left:49.4px;top:16.6px;line-height:13px;height:13px;font-size:9.0px;color:#fff;transform:scaleX(0.9197);transform-origin:0 0;">DXESQLAG-2</div>
<div style="left:164.5px;top:16.6px;line-height:13px;height:13px;font-size:9.0px;color:#222;transform:scaleX(1.0389);transform-origin:0 0;">5</div>
<div style="left:242.2px;top:16.6px;line-height:13px;height:13px;font-size:9.0px;color:#222;transform:scaleX(0.8929);transform-origin:0 0;">AG1_msdb</div>
<div style="left:334.7px;top:16.6px;line-height:13px;height:13px;font-size:9.0px;color:#222;transform:scaleX(0.9521);transform-origin:0 0;">false</div>
<div style="left:392.1px;top:16.6px;line-height:13px;height:13px;font-size:9.0px;color:#222;transform:scaleX(0.9521);transform-origin:0 0;">false</div>
<div style="left:494.4px;top:16.6px;line-height:13px;height:13px;font-size:9.0px;color:#222;transform:scaleX(0.9521);transform-origin:0 0;">false</div>
<div style="left:580.4px;top:16.6px;line-height:13px;height:13px;font-size:9.0px;color:#222;transform:scaleX(0.9222);transform-origin:0 0;">SYNCHRONIZED</div>
<div style="left:49.4px;top:33.5px;line-height:13px;height:13px;font-size:9.0px;color:#222;transform:scaleX(0.8988);transform-origin:0 0;">DXESQLAG-1</div>
<div style="left:164.5px;top:33.5px;line-height:13px;height:13px;font-size:9.0px;color:#222;transform:scaleX(1.0389);transform-origin:0 0;">5</div>
<div style="left:242.2px;top:33.5px;line-height:13px;height:13px;font-size:9.0px;color:#222;transform:scaleX(0.8929);transform-origin:0 0;">AG1_msdb</div>
<div style="left:334.7px;top:33.5px;line-height:13px;height:13px;font-size:9.0px;color:#222;transform:scaleX(0.9521);transform-origin:0 0;">false</div>
<div style="left:392.1px;top:33.5px;line-height:13px;height:13px;font-size:9.0px;color:#222;transform:scaleX(0.9521);transform-origin:0 0;">false</div>
<div style="left:494.4px;top:33.5px;line-height:13px;height:13px;font-size:9.0px;color:#222;transform:scaleX(0.9521);transform-origin:0 0;">false</div>
<div style="left:580.4px;top:33.5px;line-height:13px;height:13px;font-size:9.0px;color:#222;transform:scaleX(0.9222);transform-origin:0 0;">SYNCHRONIZED</div>
<div style="left:49.4px;top:50.5px;line-height:13px;height:13px;font-size:9.0px;color:#222;transform:scaleX(0.9214);transform-origin:0 0;">DXESQLAG-0</div>
<div style="left:164.5px;top:50.5px;line-height:13px;height:13px;font-size:9.0px;color:#222;transform:scaleX(1.0389);transform-origin:0 0;">5</div>
<div style="left:242.2px;top:50.5px;line-height:13px;height:13px;font-size:9.0px;color:#222;transform:scaleX(0.8929);transform-origin:0 0;">AG1_msdb</div>
<div style="left:334.7px;top:50.5px;line-height:13px;height:13px;font-size:9.0px;color:#222;transform:scaleX(0.9608);transform-origin:0 0;">true</div>
<div style="left:392.1px;top:50.5px;line-height:13px;height:13px;font-size:9.0px;color:#222;transform:scaleX(0.9608);transform-origin:0 0;">true</div>
<div style="left:494.4px;top:50.5px;line-height:13px;height:13px;font-size:9.0px;color:#222;transform:scaleX(0.9521);transform-origin:0 0;">false</div>
<div style="left:580.4px;top:50.5px;line-height:13px;height:13px;font-size:9.0px;color:#222;transform:scaleX(0.9222);transform-origin:0 0;">SYNCHRONIZED</div>
<div style="left:49.4px;top:67.4px;line-height:13px;height:13px;font-size:9.0px;color:#222;transform:scaleX(0.9197);transform-origin:0 0;">DXESQLAG-2</div>
<div style="left:164.5px;top:67.4px;line-height:13px;height:13px;font-size:9.0px;color:#222;transform:scaleX(0.9630);transform-origin:0 0;">16375</div>
<div style="left:242.2px;top:67.4px;line-height:13px;height:13px;font-size:9.0px;color:#222;transform:scaleX(0.9006);transform-origin:0 0;">AG1_master</div>
<div style="left:334.7px;top:67.4px;line-height:13px;height:13px;font-size:9.0px;color:#222;transform:scaleX(0.9521);transform-origin:0 0;">false</div>
<div style="left:392.1px;top:67.4px;line-height:13px;height:13px;font-size:9.0px;color:#222;transform:scaleX(0.9521);transform-origin:0 0;">false</div>
<div style="left:494.4px;top:67.4px;line-height:13px;height:13px;font-size:9.0px;color:#222;transform:scaleX(0.9521);transform-origin:0 0;">false</div>
<div style="left:580.4px;top:67.4px;line-height:13px;height:13px;font-size:9.0px;color:#222;transform:scaleX(0.9222);transform-origin:0 0;">SYNCHRONIZED</div>
<div style="left:49.4px;top:84.3px;line-height:13px;height:13px;font-size:9.0px;color:#222;transform:scaleX(0.8988);transform-origin:0 0;">DXESQLAG-1</div>
<div style="left:164.5px;top:84.3px;line-height:13px;height:13px;font-size:9.0px;color:#222;transform:scaleX(0.9630);transform-origin:0 0;">16375</div>
<div style="left:242.2px;top:84.3px;line-height:13px;height:13px;font-size:9.0px;color:#222;transform:scaleX(0.9006);transform-origin:0 0;">AG1_master</div>
<div style="left:334.7px;top:84.3px;line-height:13px;height:13px;font-size:9.0px;color:#222;transform:scaleX(0.9521);transform-origin:0 0;">false</div>
<div style="left:392.1px;top:84.3px;line-height:13px;height:13px;font-size:9.0px;color:#222;transform:scaleX(0.9521);transform-origin:0 0;">false</div>
<div style="left:494.4px;top:84.3px;line-height:13px;height:13px;font-size:9.0px;color:#222;transform:scaleX(0.9521);transform-origin:0 0;">false</div>
<div style="left:580.4px;top:84.3px;line-height:13px;height:13px;font-size:9.0px;color:#222;transform:scaleX(0.9222);transform-origin:0 0;">SYNCHRONIZED</div>
<div style="left:49.4px;top:101.3px;line-height:13px;height:13px;font-size:9.0px;color:#222;transform:scaleX(0.9214);transform-origin:0 0;">DXESQLAG-0</div>
<div style="left:164.5px;top:101.3px;line-height:13px;height:13px;font-size:9.0px;color:#222;transform:scaleX(0.9630);transform-origin:0 0;">16375</div>
<div style="left:242.2px;top:101.3px;line-height:13px;height:13px;font-size:9.0px;color:#222;transform:scaleX(0.9006);transform-origin:0 0;">AG1_master</div>
<div style="left:334.7px;top:101.3px;line-height:13px;height:13px;font-size:9.0px;color:#222;transform:scaleX(0.9608);transform-origin:0 0;">true</div>
<div style="left:392.1px;top:101.3px;line-height:13px;height:13px;font-size:9.0px;color:#222;transform:scaleX(0.9608);transform-origin:0 0;">true</div>
<div style="left:494.4px;top:101.3px;line-height:13px;height:13px;font-size:9.0px;color:#222;transform:scaleX(0.9521);transform-origin:0 0;">false</div>
<div style="left:580.4px;top:101.3px;line-height:13px;height:13px;font-size:9.0px;color:#222;transform:scaleX(0.9222);transform-origin:0 0;">SYNCHRONIZED</div>
</div>
<div style="left:299.500px;top:505px;width:670.500px;height:11.200px;background:#f0f0f0"></div>
<div style="left:312.500px;top:505px;width:424.700px;height:11.200px;background:#cdcdcd"></div>
<svg style="left:300.5px;top:505.4px" width="10" height="10" viewBox="-5 -5 10 10"><path transform="translate(-1.3 0)" d="M2.6 -2.6L0 0L2.6 2.6" fill="none" stroke="#505050" stroke-width="1.3"/></svg>
<svg style="left:958.6px;top:505.4px" width="10" height="10" viewBox="-5 -5 10 10"><path transform="translate(1.3 0)" d="M-2.6 -2.6L0 0L-2.6 2.6" fill="none" stroke="#505050" stroke-width="1.3"/></svg>
<div style="left:972px;top:514px;width:3px;height:5px;background:#6a2a8a"></div>
<div style="left:0;top:500px;width:2px;height:19px;background:#5a2f86"></div>
</body></html>
